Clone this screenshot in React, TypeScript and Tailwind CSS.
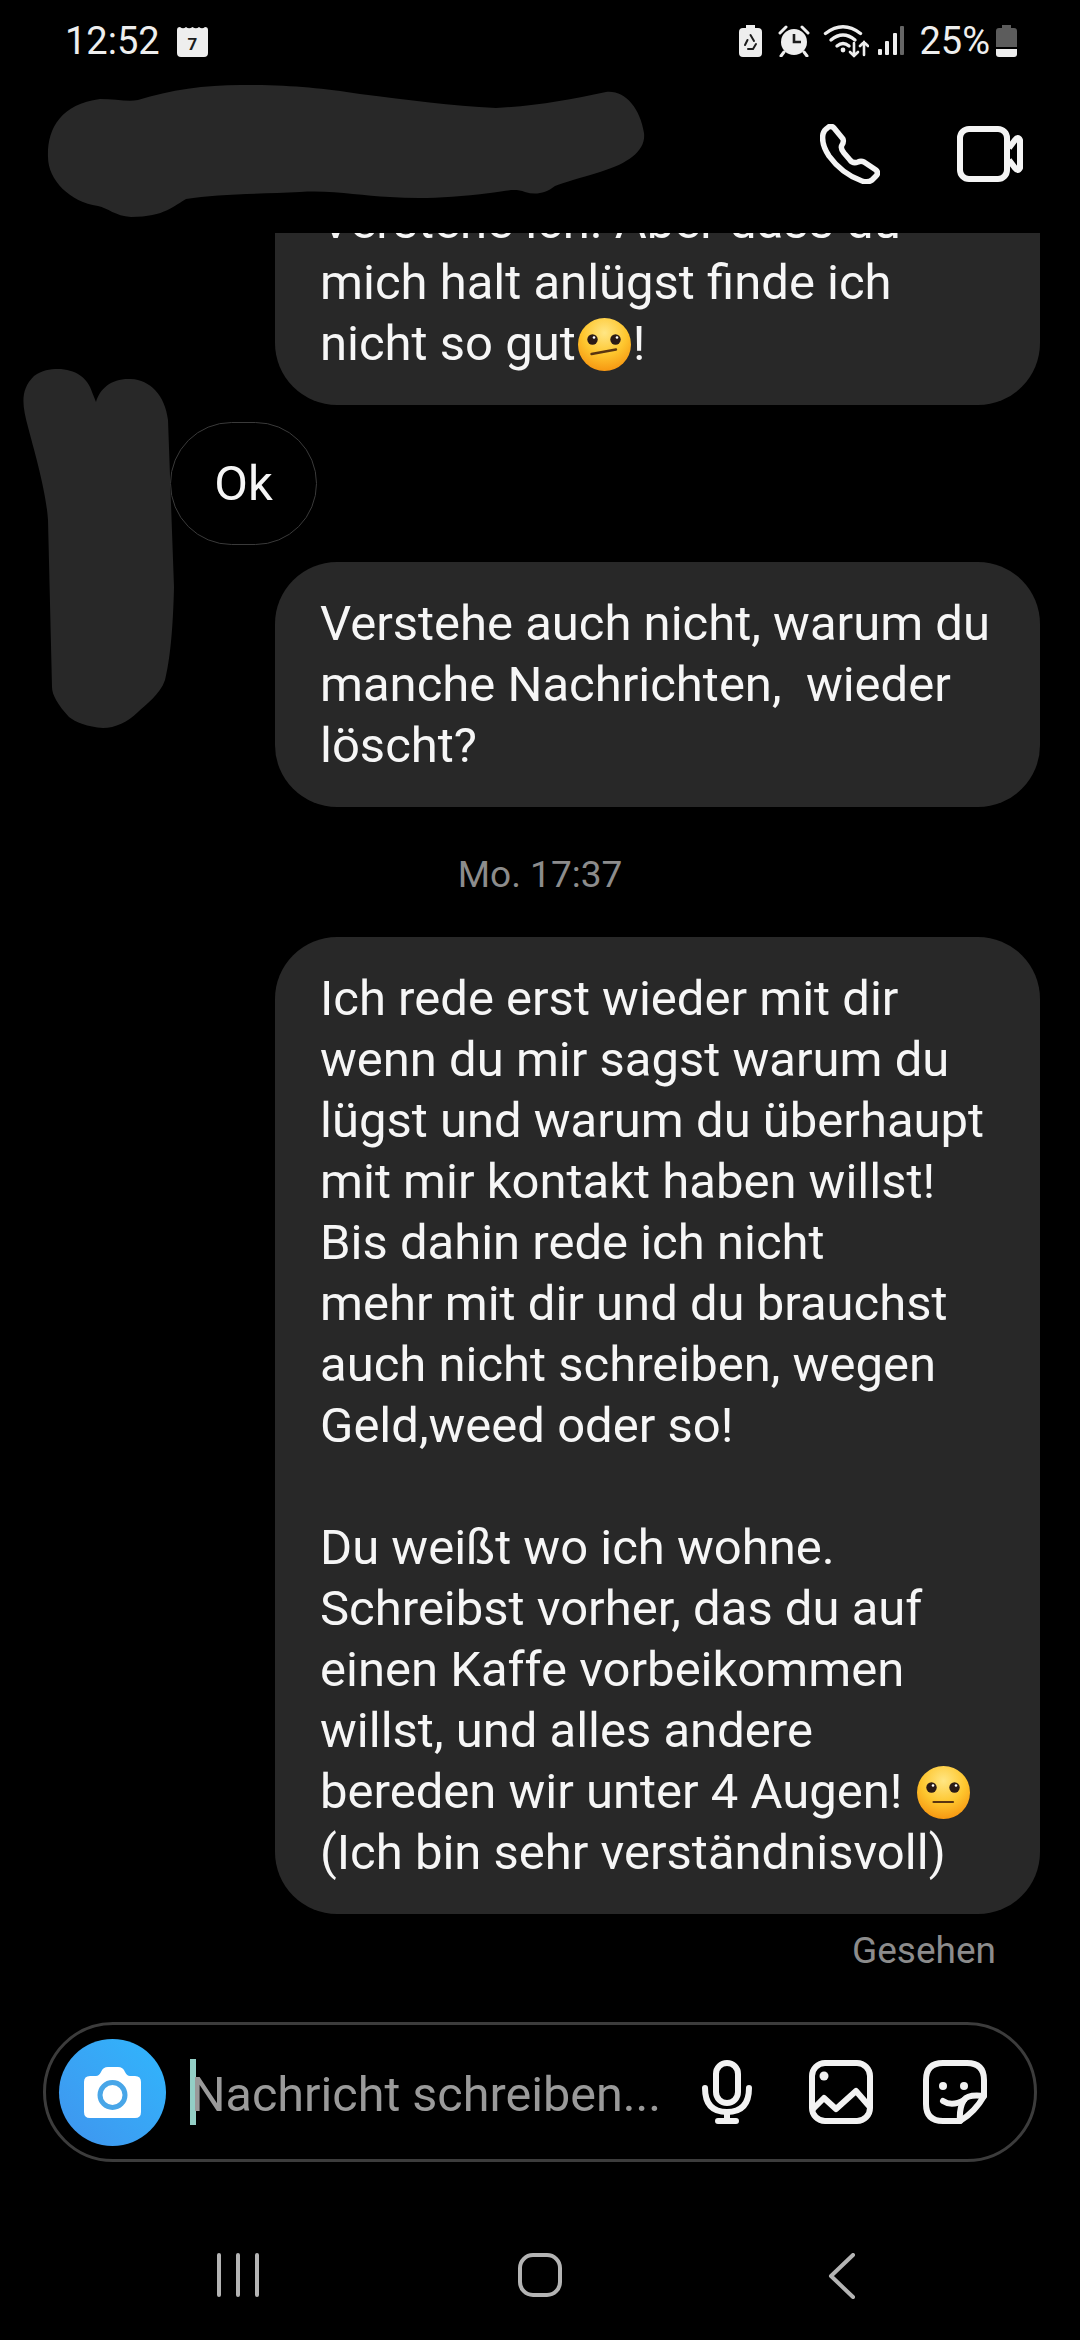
import type { ReactNode } from 'react'

const bubble1 = ['Verstehe ich. Aber dass du', 'mich halt anlügst finde ich']
const bubble2 = ['Verstehe auch nicht, warum du', 'manche Nachrichten,  wieder', 'löscht?']
const bubble3 = [
  'Ich rede erst wieder mit dir',
  'wenn du mir sagst warum du',
  'lügst und warum du überhaupt',
  'mit mir kontakt haben willst!',
  'Bis dahin rede ich nicht',
  'mehr mit dir und du brauchst',
  'auch nicht schreiben, wegen',
  'Geld,weed oder so!',
  ' ',
  'Du weißt wo ich wohne.',
  'Schreibst vorher, das du auf',
  'einen Kaffe vorbeikommen',
  'willst, und alles andere',
]

function Emoji({ id, tilted }: { id: string; tilted?: boolean }) {
  return (
    <svg viewBox="0 0 53 53" className="inline-block w-[53px] h-[53px] align-[-11px] mx-[2px]">
      <defs>
        <radialGradient id={id} cx="50%" cy="28%" r="75%">
          <stop offset="0%" stopColor="#ffe684" />
          <stop offset="55%" stopColor="#fec62e" />
          <stop offset="100%" stopColor="#f6930f" />
        </radialGradient>
      </defs>
      <circle cx="26.5" cy="26.5" r="26.5" fill={`url(#${id})`} />
      <circle cx="14.5" cy="21.5" r="5.2" fill="#2a1a16" />
      <circle cx="37.5" cy="21.5" r="5.2" fill="#2a1a16" />
      <circle cx="16" cy="19.5" r="1.3" fill="#fff" />
      <circle cx="39" cy="19.5" r="1.3" fill="#fff" />
      {tilted ? (
        <path d="M13.5 36 L38 31.5" stroke="#5a3510" strokeWidth="2.4" strokeLinecap="round" />
      ) : (
        <path d="M16.5 36 L36 36" stroke="#5a3510" strokeWidth="2.2" strokeLinecap="round" />
      )}
    </svg>
  )
}

function StatusBar() {
  return (
    <div className="h-[75px] flex items-center justify-between pl-[65px] pr-[63px] pt-[7px] text-[#eeeeee]">
      <div className="flex items-center gap-[17px]">
        <span className="text-[38px] leading-none">12:52</span>
        <svg viewBox="0 0 31 31" className="w-[31px] h-[31px]">
          <path d="M3 1 Q6 3.5 9 1 Q12 3.5 15.5 1 Q19 3.5 22 1 Q25 3.5 28 1 Q31 1 31 4 V27 Q31 31 27 31 H4 Q0 31 0 27 V4 Q0 1 3 1Z" fill="#eeeeee" />
          <text x="15.5" y="24" textAnchor="middle" fontSize="17" fontWeight="700" fill="#1c1c1c">7</text>
        </svg>
      </div>
      <div className="flex items-center">
        <svg viewBox="0 0 23 32" className="w-[23px] h-[32px]">
          <path d="M7 0 H16 V3 H19 Q23 3 23 7 V28 Q23 32 19 32 H4 Q0 32 0 28 V7 Q0 3 4 3 H7Z" fill="#eeeeee" />
          <path d="M11.5 10 L15 16 M17 19 L14 24 H9 M6 20 L8.5 15" stroke="#1c1c1c" strokeWidth="2" fill="none" strokeLinecap="round" />
        </svg>
        <svg viewBox="0 0 32 32" className="w-[32px] h-[32px] ml-[16px]">
          <circle cx="16" cy="17" r="13" fill="#eeeeee" />
          <path d="M16 9 V17 H23" stroke="#1c1c1c" strokeWidth="2.6" fill="none" />
          <path d="M2 8 L8 2 M30 8 L24 2 M6 27 L3 31 M26 27 L29 31" stroke="#eeeeee" strokeWidth="3" strokeLinecap="round" />
        </svg>
        <svg viewBox="0 0 46 36" className="w-[46px] h-[36px] ml-[13px]" fill="none" stroke="#eeeeee" strokeLinecap="round">
          <path d="M2.5 10.5 Q20 -3 37.5 10.5" strokeWidth="3.4" />
          <path d="M8 17 Q20 7 32 17" strokeWidth="3.4" />
          <path d="M14 23 Q20 18 26 23" strokeWidth="3.4" />
          <circle cx="20" cy="27" r="2.4" fill="#eeeeee" stroke="none" />
          <path d="M31 20 V33 M27 29 L31 33 L35 29" strokeWidth="2.6" />
          <path d="M41 32 V19 M37 23 L41 19 L45 23" strokeWidth="2.6" />
        </svg>
        <svg viewBox="0 0 26 30" className="w-[26px] h-[30px] ml-[9px]">
          <rect x="0" y="23" width="4" height="6" rx="1" fill="#eeeeee" />
          <rect x="7" y="15" width="4" height="14" rx="1" fill="#eeeeee" />
          <rect x="15" y="7" width="4" height="22" rx="1" fill="#eeeeee" />
          <rect x="22" y="0" width="4" height="29" rx="1" fill="#666666" />
        </svg>
        <span className="text-[38px] leading-none ml-[15px]">25%</span>
        <svg viewBox="0 0 21 32" className="w-[21px] h-[32px] ml-[6px]">
          <path d="M6 0 H15 V3 H18 Q21 3 21 6 V22 H0 V6 Q0 3 3 3 H6Z" fill="#5c5c5c" />
          <path d="M0 24 H21 V29 Q21 32 18 32 H3 Q0 32 0 29Z" fill="#eeeeee" />
        </svg>
      </div>
    </div>
  )
}

function Header() {
  return (
    <div className="h-[158px] flex items-center justify-between pr-[57px]">
      {/* geschwärzter Name */}
      <svg viewBox="0 75 650 158" className="w-[650px] h-[158px]">
        <path
          d="M48 157 C47 130 60 104 100 99 C115 99 128 102 138 100 C170 90 205 85 241 85 C290 85 320 88 360 94 C410 100 450 106 496 108 C535 106 570 100 606 92 C625 90 640 108 644 133 C646 150 630 163 600 172 C580 178 565 182 555 186 C545 194 535 195 525 192 C515 188 505 191 490 193 C450 198 420 199 390 197 C360 196 335 190 300 192 C260 194 215 194 186 199 C175 205 165 217 131 217 C115 216 108 208 98 206 C70 202 48 180 48 157Z"
          fill="#282828"
        />
      </svg>
      <div className="flex items-center gap-[77px]">
        <svg viewBox="0 0 60 60" className="w-[60px] h-[60px]" fill="none" stroke="#f4f4f4" strokeWidth="5.5" strokeLinejoin="round">
          <path d="M8 3.5 Q11 1 14 4 L23 15 Q24 18 22 21 Q20 24 24 29 L30 36 Q33 40 38 38 Q41 36.5 44 38 L56 46 Q59 49 56 52 L52 56 Q48 59 42 57 Q22 50 9 32 Q1 20 3 10 Q4 6 8 3.5Z" />
        </svg>
        <svg viewBox="0 0 66 56" className="w-[66px] h-[56px]" fill="none" stroke="#f4f4f4" strokeWidth="6" strokeLinejoin="round">
          <rect x="3" y="3" width="47" height="50" rx="9" />
          <path d="M52 22 L58 14 Q61 10 63 14 V42 Q61 46 58 42 L52 34" />
        </svg>
      </div>
    </div>
  )
}

function Bubble({ children }: { children: ReactNode }) {
  return (
    <div className="self-end shrink-0 mr-[40px] w-[765px] rounded-[62px] bg-[#282828] py-[31px] pl-[45px] text-[49px] leading-[61px] text-[#f6f6f6] whitespace-pre">
      {children}
    </div>
  )
}

function Messages() {
  return (
    <div className="flex-1 min-h-0 overflow-hidden flex flex-col justify-end">
      <Bubble>
        {bubble1.map((line) => (
          <div key={line}>{line}</div>
        ))}
        <div>
          nicht so gut
          <Emoji id="emoji-a" tilted />!
        </div>
      </Bubble>

      <div className="shrink-0 my-[17px] ml-[170px] w-[147px] h-[123px] rounded-full border border-[#3a3a3a] flex items-center justify-center text-[49px] text-[#f6f6f6]">
        Ok
      </div>

      <Bubble>
        {bubble2.map((line) => (
          <div key={line}>{line}</div>
        ))}
      </Bubble>

      <div className="shrink-0 h-[130px] pt-[6px] flex items-center justify-center text-[37px] text-[#8c8c8c]">
        Mo. 17:37
      </div>

      <Bubble>
        {bubble3.map((line, i) => (
          <div key={i}>{line}</div>
        ))}
        <div>
          bereden wir unter 4 Augen! <Emoji id="emoji-b" />
        </div>
        <div>(Ich bin sehr verständnisvoll)</div>
      </Bubble>

      <div className="shrink-0 h-[73px] pt-[16px] pr-[84px] text-right text-[37px] leading-[42px] text-[#8c8c8c] mb-[35px]">
        Gesehen
      </div>
    </div>
  )
}

function Composer() {
  return (
    <div className="mx-[43px] h-[140px] shrink-0 rounded-full border-[3px] border-[#3c3c3c] flex items-center pl-[13px] pr-[47px]">
      <div className="w-[107px] h-[107px] shrink-0 rounded-full bg-linear-to-bl from-[#2fb6fc] to-[#3f94ee]">
        <svg viewBox="0 0 107 107" className="w-[107px] h-[107px]">
          <path d="M31 37 H37 Q40 37 42 33 Q44 28 49 28 H59 Q64 28 66 33 Q68 37 71 37 H76 Q82 37 82 43 V73 Q82 79 76 79 H31 Q25 79 25 73 V43 Q25 37 31 37Z" fill="#ffffff" />
          <circle cx="53.5" cy="56" r="12.5" fill="#ffffff" stroke="#48a6e8" strokeWidth="5" />
        </svg>
      </div>
      <div className="ml-[24px] w-[6px] h-[66px] shrink-0 bg-[#93cfc6]" />
      <span className="-ml-[5px] pt-[6px] text-[48.5px] text-[#9a9a9a] whitespace-nowrap">Nachricht schreiben...</span>
      <div className="ml-auto flex items-center gap-[50px] text-[#f2f2f2]">
        <svg viewBox="0 0 64 64" className="w-[64px] h-[64px]" fill="none" stroke="currentColor" strokeWidth="6" strokeLinecap="round">
          <rect x="21" y="3" width="22" height="40" rx="11" />
          <path d="M10 28 Q10 52 32 52 Q54 52 54 28" />
          <path d="M32 52 V60 M23 61 H41" />
        </svg>
        <svg viewBox="0 0 64 64" className="w-[64px] h-[64px]" fill="none" stroke="currentColor" strokeWidth="6" strokeLinejoin="round">
          <rect x="3" y="3" width="58" height="58" rx="13" />
          <circle cx="15" cy="16" r="4.5" fill="currentColor" stroke="none" />
          <path d="M4 49 L15 38 L27 49 L47 31 L60 46" />
        </svg>
        <svg viewBox="0 0 64 64" className="w-[64px] h-[64px]" fill="none" stroke="currentColor" strokeWidth="6" strokeLinecap="round" strokeLinejoin="round">
          <path d="M37 61 H20 Q3 61 3 44 V20 Q3 3 20 3 H44 Q61 3 61 20 V36 Q52 52 37 61Z" />
          <path d="M61 36 Q45 34 41 40 Q36 48 37 61" />
          <path d="M20 41 Q29 47 41 40" />
          <circle cx="20" cy="26" r="4" fill="currentColor" stroke="none" />
          <circle cx="41" cy="26" r="4" fill="currentColor" stroke="none" />
        </svg>
      </div>
    </div>
  )
}

function NavBar() {
  return (
    <div className="h-[178px] shrink-0 pt-[91px] px-[87px] grid grid-cols-3 justify-items-center items-start text-[#b4b4b4]">
      <svg viewBox="0 0 42 44" className="w-[42px] h-[44px]" fill="none" stroke="currentColor" strokeWidth="4" strokeLinecap="round">
        <path d="M2 2 V42 M21 2 V42 M40 2 V42" />
      </svg>
      <svg viewBox="0 0 44 44" className="w-[44px] h-[44px]" fill="none" stroke="currentColor" strokeWidth="4">
        <rect x="2" y="2" width="40" height="40" rx="13" />
      </svg>
      <svg viewBox="0 0 28 46" className="w-[28px] h-[46px]" fill="none" stroke="currentColor" strokeWidth="4" strokeLinecap="round" strokeLinejoin="round">
        <path d="M25 2 L3 23 L25 44" />
      </svg>
    </div>
  )
}

export default function App() {
  return (
    <div className="relative w-[1080px] h-[2340px] bg-black flex flex-col overflow-hidden font-[family-name:Roboto,sans-serif]">
      <StatusBar />
      <Header />
      <Messages />
      <Composer />
      <NavBar />
      {/* geschwärzter Avatar, liegt über dem Verlauf */}
      <svg viewBox="0 0 180 740" className="absolute left-0 top-0 w-[180px] h-[740px]">
        <path
          d="M58 369 C75 369 88 378 92 392 L96 402 C100 388 112 378 131 379 C150 380 165 395 168 420 L174 587 C173 630 170 660 165 680 C160 695 145 705 138 712 C128 722 115 728 103 728 C88 727 75 722 69 717 C58 705 52 695 52 687 L48 520 C46 490 34 450 28 427 C22 405 20 390 34 376 C42 370 50 369 58 369Z"
          fill="#282828"
        />
      </svg>
    </div>
  )
}
